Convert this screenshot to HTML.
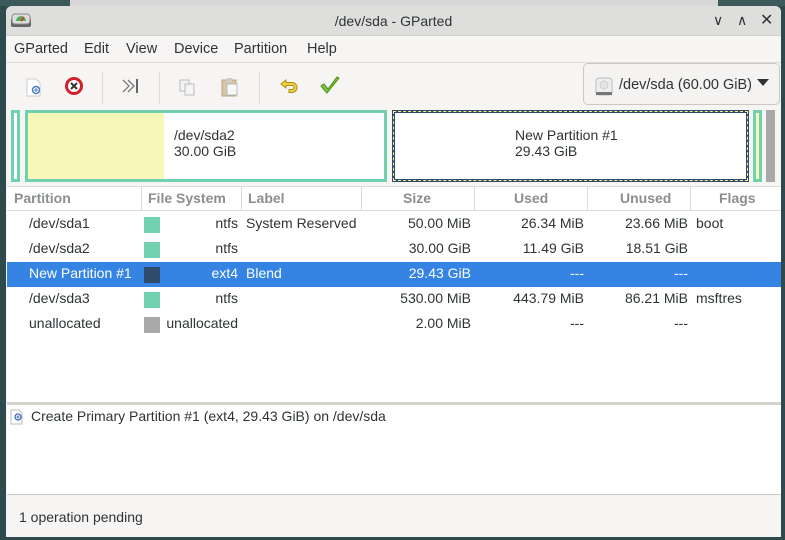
<!DOCTYPE html>
<html><head><style>
*{margin:0;padding:0;box-sizing:border-box}
body{width:785px;height:540px;overflow:hidden;background:#2f4a4c;font-family:"Liberation Sans",sans-serif;font-size:14px;color:#2e3436;position:relative}
.a{position:absolute;white-space:nowrap}
#win{position:absolute;left:6px;top:6px;width:775px;height:531px;background:#f6f5f4;overflow:hidden;border-radius:6px 6px 0 0}
.r{text-align:right}
.sq{position:absolute;width:16px;height:16px}
</style></head><body>
<div class="a" style="left:0;top:0;width:785px;height:6px;background:#3c5a5c"></div>
<div class="a" style="left:70px;top:0;width:648px;height:6px;background:#d8d8d8"></div>
<div id="win">
 <div class="a" style="left:0;top:0;width:775px;height:30px;background:#dededd;border-bottom:1px solid #d0cfcc"></div>
 <svg class="a" style="left:4px;top:5px" width="22" height="20" viewBox="0 0 22 20"><rect x="1" y="7" width="20" height="9" rx="2" fill="#666"/><rect x="2" y="3" width="18" height="10" rx="3" fill="#ddd" stroke="#888"/><path d="M6 10a5 5 0 0 1 10 0z" fill="#5a5"/><path d="M11 10l3-4" stroke="#c33" stroke-width="1.5"/></svg>
 <div class="a" style="left:0;width:775px;top:7px;text-align:center;font-size:14px">/dev/sda - GParted</div>
 <div class="a" style="left:707px;top:6px;font-size:14px">&#x2228;</div>
 <div class="a" style="left:731px;top:6px;font-size:14px">&#x2227;</div>
 <div class="a" style="left:754px;top:4px;font-size:16px">&#x2715;</div>
 <div class="a" style="top:35px;left:8px;font-size:14.5px">GParted</div>
 <div class="a" style="top:35px;left:78px;font-size:14.5px">Edit</div>
 <div class="a" style="top:35px;left:120px;font-size:14.5px">View</div>
 <div class="a" style="top:35px;left:168px;font-size:14.5px">Device</div>
 <div class="a" style="top:35px;left:228px;font-size:14.5px">Partition</div>
 <div class="a" style="top:35px;left:301px;font-size:14.5px">Help</div>
 <div class="a" style="left:0;top:56px;width:775px;height:1px;background:#dedbd8"></div>
 <svg class="a" style="left:18px;top:70px" width="20" height="22"><path d="M3 3h9l4 4v13H3z" fill="#fff" stroke="#ccc"/><circle cx="12" cy="14" r="3.5" fill="#fff" stroke="#4a7bc4" stroke-width="1.5"/><path d="M10 14h4M12 12v4" stroke="#4a7bc4"/></svg>
 <svg class="a" style="left:58px;top:70px" width="20" height="20"><circle cx="10" cy="10" r="7.5" fill="#fff" stroke="#d0202a" stroke-width="3"/><path d="M7 7l6 6M13 7l-6 6" stroke="#333" stroke-width="2"/></svg>
 <div class="a" style="left:96px;top:66px;width:1px;height:32px;background:#dcdad7"></div>
 <svg class="a" style="left:114px;top:70px" width="22" height="20"><path d="M3 4l6 6-6 6M8 4l6 6-6 6" stroke="#777" fill="none" stroke-width="1.3"/><path d="M17 3v14" stroke="#666" stroke-width="2"/></svg>
 <div class="a" style="left:153px;top:66px;width:1px;height:32px;background:#dcdad7"></div>
 <svg class="a" style="left:172px;top:72px" width="20" height="20"><rect x="2" y="2" width="9" height="11" fill="#f4f4f4" stroke="#bbb"/><rect x="7" y="6" width="9" height="11" fill="#f4f4f4" stroke="#bbb"/></svg>
 <svg class="a" style="left:213px;top:70px" width="22" height="22"><rect x="3" y="4" width="14" height="16" fill="#d8c6a6" stroke="#b9a27f"/><rect x="7" y="2" width="6" height="4" fill="#ccc"/><rect x="8" y="8" width="10" height="11" fill="#f8f8f8" stroke="#bbb"/></svg>
 <div class="a" style="left:253px;top:66px;width:1px;height:32px;background:#dcdad7"></div>
 <svg class="a" style="left:272px;top:72px" width="22" height="18"><path d="M3 6l5-4v2.5h6a5 5 0 0 1 0 10h-3v-3h3a2 2 0 0 0 0-4H8V10z" fill="#f0d040" stroke="#b09010"/></svg>
 <svg class="a" style="left:312px;top:68px" width="24" height="24"><path d="M3 12l6 7L21 4l-2-1-9 12-4-5z" fill="#7ec63c" stroke="#4a8c1c"/></svg>
 <div class="a" style="left:577px;top:57px;width:197px;height:42px;border:1px solid #cdc7c2;border-radius:5px;background:#f4f3f2"></div>
 <svg class="a" style="left:589px;top:70px" width="18" height="20"><rect x="1" y="2" width="16" height="17" rx="3" fill="#eee" stroke="#bbb"/><circle cx="9" cy="9" r="4" fill="#e4e4e4" stroke="#ccc"/><rect x="1" y="16" width="16" height="3" fill="#777"/></svg>
 <div class="a" style="left:613px;top:71px;font-size:14.5px">/dev/sda (60.00 GiB)</div>
 <div class="a" style="left:751px;top:73px;width:0;height:0;border-left:6px solid transparent;border-right:6px solid transparent;border-top:7px solid #2e3436"></div>
 <div class="a" style="left:5px;top:104px;width:9px;height:72px;border:3px solid #70d0b0;background:#fff"></div>
 <div class="a" style="left:19px;top:104px;width:362px;height:72px;border:3px solid #70d0b0;background:#fff"><div style="width:136px;height:100%;background:#f7f7b8"></div></div>
 <div class="a" style="left:168px;top:121px">/dev/sda2<br>30.00 GiB</div>
 <div class="a" style="left:386px;top:104px;width:357px;height:72px;background:#2f4a6a">
  <div class="a" style="left:1px;top:1px;right:1px;bottom:1px;border:1px dashed #f7f090"></div>
  <div class="a" style="left:3px;top:3px;right:3px;bottom:3px;background:#fff"></div>
 </div>
 <div class="a" style="left:509px;top:121px">New Partition #1<br>29.43 GiB</div>
 <div class="a" style="left:747px;top:104px;width:9px;height:72px;border:3px solid #70d0b0;background:#f7f7b8"></div>
 <div class="a" style="left:760px;top:104px;width:9px;height:72px;background:#a8a8a8"></div>
 <div class="a" style="left:1px;top:180px;width:774px;height:216px;background:#fff;border-top:1px solid #dedbd8"></div>
 <div class="a" style="left:1px;top:181px;width:774px;height:24px;border-bottom:1px solid #dedbd8;color:#8a8e8f;font-weight:bold;font-size:14px">
  <div class="a" style="left:7px;top:3px">Partition</div>
  <div class="a" style="left:134px;top:0;width:1px;height:24px;background:#dedbd8"></div>
  <div class="a" style="left:141px;top:3px">File System</div>
  <div class="a" style="left:234px;top:0;width:1px;height:24px;background:#dedbd8"></div>
  <div class="a" style="left:241px;top:3px">Label</div>
  <div class="a" style="left:354px;top:0;width:1px;height:24px;background:#dedbd8"></div>
  <div class="a" style="left:396px;top:3px">Size</div>
  <div class="a" style="left:467px;top:0;width:1px;height:24px;background:#dedbd8"></div>
  <div class="a" style="left:507px;top:3px">Used</div>
  <div class="a" style="left:580px;top:0;width:1px;height:24px;background:#dedbd8"></div>
  <div class="a" style="left:613px;top:3px">Unused</div>
  <div class="a" style="left:683px;top:0;width:1px;height:24px;background:#dedbd8"></div>
  <div class="a" style="left:712px;top:3px">Flags</div>
 </div>
 <div class="a" style="left:1px;top:256px;width:774px;height:25px;background:#3584e4"></div>
 <div class="a" style="left:23px;top:209px">/dev/sda1</div><div class="sq" style="left:138px;top:211px;background:#70d0b0"></div><div class="a r" style="left:150px;width:82px;top:209px">ntfs</div><div class="a" style="left:240px;top:209px">System Reserved</div><div class="a r" style="left:360px;width:105px;top:209px">50.00 MiB</div><div class="a r" style="left:470px;width:108px;top:209px">26.34 MiB</div><div class="a r" style="left:580px;width:102px;top:209px">23.66 MiB</div><div class="a" style="left:690px;top:209px">boot</div>
 <div class="a" style="left:23px;top:234px">/dev/sda2</div><div class="sq" style="left:138px;top:236px;background:#70d0b0"></div><div class="a r" style="left:150px;width:82px;top:234px">ntfs</div><div class="a r" style="left:360px;width:105px;top:234px">30.00 GiB</div><div class="a r" style="left:470px;width:108px;top:234px">11.49 GiB</div><div class="a r" style="left:580px;width:102px;top:234px">18.51 GiB</div>
 <div style="color:#fff"><div class="a" style="left:23px;top:259px">New Partition #1</div><div class="sq" style="left:138px;top:261px;background:#2f4a6a"></div><div class="a r" style="left:150px;width:82px;top:259px">ext4</div><div class="a" style="left:240px;top:259px">Blend</div><div class="a r" style="left:360px;width:105px;top:259px">29.43 GiB</div><div class="a r" style="left:470px;width:108px;top:259px">---</div><div class="a r" style="left:580px;width:102px;top:259px">---</div></div>
 <div class="a" style="left:23px;top:284px">/dev/sda3</div><div class="sq" style="left:138px;top:286px;background:#70d0b0"></div><div class="a r" style="left:150px;width:82px;top:284px">ntfs</div><div class="a r" style="left:360px;width:105px;top:284px">530.00 MiB</div><div class="a r" style="left:470px;width:108px;top:284px">443.79 MiB</div><div class="a r" style="left:580px;width:102px;top:284px">86.21 MiB</div><div class="a" style="left:690px;top:284px">msftres</div>
 <div class="a" style="left:23px;top:309px">unallocated</div><div class="sq" style="left:138px;top:311px;background:#a8a8a8"></div><div class="a r" style="left:150px;width:82px;top:309px">unallocated</div><div class="a r" style="left:360px;width:105px;top:309px">2.00 MiB</div><div class="a r" style="left:470px;width:108px;top:309px">---</div><div class="a r" style="left:580px;width:102px;top:309px">---</div>
 <div class="a" style="left:1px;top:396px;width:774px;height:3px;background:#d6d3cf"></div>
 <div class="a" style="left:1px;top:399px;width:774px;height:90px;background:#fff;border-bottom:1px solid #cdc9c4"></div>
 <svg class="a" style="left:4px;top:403px" width="14" height="16"><path d="M1 1h8l3 3v11H1z" fill="#fff" stroke="#bbb"/><circle cx="8" cy="8" r="3" fill="#fff" stroke="#3a6bb4" stroke-width="1.3"/><path d="M6.5 8h3M8 6.5v3" stroke="#3a6bb4"/></svg>
 <div class="a" style="left:25px;top:402px">Create Primary Partition #1 (ext4, 29.43 GiB) on /dev/sda</div>
 <div class="a" style="left:13px;top:503px">1 operation pending</div>
</div>
</body></html>
